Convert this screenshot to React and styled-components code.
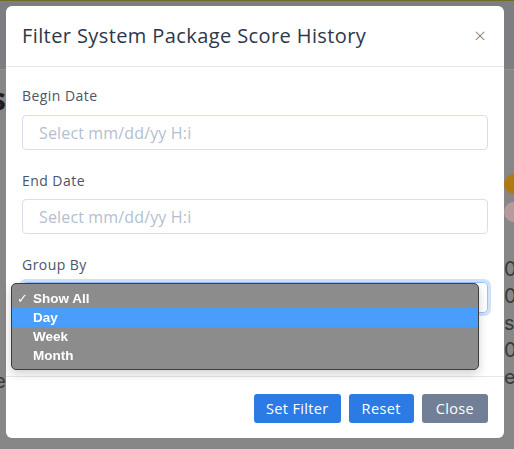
import React from 'react';
import styled, { createGlobalStyle } from 'styled-components';

const GlobalStyle = createGlobalStyle`
  html, body {
    margin: 0;
    padding: 0;
    height: 100%;
    background: #878787;
    overflow: hidden;
  }
  #root {
    height: 100%;
  }
  * {
    box-sizing: border-box;
  }
`;

const Page = styled.div`
  height: 100%;
  display: flex;
  flex-direction: column;
  border-top: 1px solid #6f6c2b;
  font-family: 'Open Sans', sans-serif;
`;

const TopBar = styled.div`
  height: 69px;
  background: #7d7e81;
  border-bottom: 1px solid #8f9093;
`;

const PageBody = styled.div`
  flex: 1;
  display: flex;
  justify-content: space-between;
`;

const Gutter = styled.div`
  width: ${(p) => p.width}px;
  overflow: hidden;
  display: flex;
  flex-direction: column;
  align-items: ${(p) => (p.right ? 'flex-start' : 'flex-end')};
  padding-top: ${(p) => p.top}px;
  color: #3c3c3c;
`;

const GhostHeading = styled.div`
  font-size: 30px;
  font-weight: 700;
  line-height: 30px;
  color: #1f1f1f;
  margin-bottom: 254px;
`;

const GhostText = styled.div`
  font-size: 20px;
  line-height: 26px;
  height: 27px;
  white-space: nowrap;
  color: #3a3a3a;
  font-family: 'Inter', sans-serif;
`;

const Dot = styled.div`
  width: 20px;
  height: 20px;
  border-radius: 50%;
  background: ${(p) => p.color};
  margin-bottom: 8px;
  flex: none;
`;

const Overlay = styled.div`
  position: fixed;
  inset: 0;
  padding: 6px 10px 0 6px;
`;

const Modal = styled.div`
  width: 498px;
  background: #fff;
  border-radius: 6px;
  font-family: 'Open Sans', sans-serif;
`;

const ModalHeader = styled.div`
  height: 61px;
  display: flex;
  align-items: center;
  justify-content: space-between;
  padding: 0 18px 2px 16px;
  border-bottom: 1px solid #e2e8f0;
`;

const Title = styled.h5`
  margin: 0;
  font-size: 20px;
  font-weight: 500;
  color: #2d3748;
  letter-spacing: 0.4px;
`;

const CloseIcon = styled.span`
  font-size: 21px;
  line-height: 1;
  color: #7b7b7b;
  font-weight: 300;
`;

const ModalBody = styled.div`
  padding: 19px 16px 63px;
`;

const Field = styled.div`
  position: relative;
  margin-bottom: ${(p) => (p.last ? 0 : 21)}px;
`;

const Label = styled.label`
  display: block;
  font-size: 14px;
  line-height: 20px;
  font-weight: 500;
  color: #4a5568;
  letter-spacing: 0.45px;
  margin-bottom: ${(p) => p.gap}px;
`;

const Input = styled.input`
  display: block;
  width: 100%;
  height: 35px;
  border: 1px solid #d7e0eb;
  border-radius: 4px;
  padding: 1px 16px 0;
  font-family: 'Open Sans', sans-serif;
  font-size: 16px;
  letter-spacing: 0.15px;
  color: #2d3748;
  outline: none;

  &::placeholder {
    color: #b3bfd0;
  }
`;

const Select = styled.div`
  height: 31px;
  border: 1px solid #9cc3f5;
  border-radius: 4px;
  box-shadow: 0 0 0 3px #cfe2fb;
`;

const Dropdown = styled.ul`
  position: absolute;
  left: -11px;
  top: 28px;
  width: 468px;
  margin: 0;
  padding: 5px 0 4px;
  list-style: none;
  background: #8c8c8c;
  border: 1px solid #3d3d3d;
  border-radius: 5px;
  box-shadow: 0 4px 10px rgba(0, 0, 0, 0.18);
  font-family: 'Liberation Sans', Arial, sans-serif;
`;

const Option = styled.li`
  display: flex;
  align-items: center;
  height: 19px;
  padding-left: 5px;
  font-size: 13.5px;
  font-weight: 700;
  color: #fff;
  background: ${(p) => (p.active ? '#4a9dfa' : 'transparent')};
`;

const Check = styled.span`
  width: 16px;
  font-size: 13px;
  font-weight: 400;
`;

const ModalFooter = styled.div`
  display: flex;
  justify-content: flex-end;
  gap: 8px;
  padding: 17px 16px 15px;
  border-top: 1px solid #e2e8f0;
`;

const Button = styled.button`
  height: 29px;
  padding: 0 ${(p) => p.pad}px;
  border: none;
  border-radius: 3px;
  background: ${(p) => (p.muted ? '#718096' : '#2c7be5')};
  color: #fff;
  font-family: 'Open Sans', sans-serif;
  font-size: 14.5px;
  font-weight: 500;
  letter-spacing: 0.35px;
`;

const options = ['Show All', 'Day', 'Week', 'Month'];

export default function App() {
  return (
    <>
      <GlobalStyle />
      <Page>
        <TopBar />
        <PageBody>
          <Gutter width={6} top={14}>
            <GhostHeading>s</GhostHeading>
            <GhostText>e</GhostText>
          </Gutter>
          <Gutter width={10} top={104} right>
            <Dot color="#b07a12" />
            <Dot color="#b69a9c" />
            <div style={{ height: 26 }} />
            <GhostText>0</GhostText>
            <GhostText>0</GhostText>
            <GhostText>st</GhostText>
            <GhostText>0</GhostText>
            <GhostText>er</GhostText>
          </Gutter>
        </PageBody>
      </Page>
      <Overlay>
        <Modal>
          <ModalHeader>
            <Title>Filter System Package Score History</Title>
            <CloseIcon>×</CloseIcon>
          </ModalHeader>
          <ModalBody>
            <Field>
              <Label gap={9}>Begin Date</Label>
              <Input placeholder="Select mm/dd/yy H:i" />
            </Field>
            <Field>
              <Label gap={8}>End Date</Label>
              <Input placeholder="Select mm/dd/yy H:i" />
            </Field>
            <Field last>
              <Label gap={7}>Group By</Label>
              <Select />
              <Dropdown>
                {options.map((o, i) => (
                  <Option key={o} active={i === 1}>
                    <Check>{i === 0 ? '✓' : ''}</Check>
                    {o}
                  </Option>
                ))}
              </Dropdown>
            </Field>
          </ModalBody>
          <ModalFooter>
            <Button pad={12}>Set Filter</Button>
            <Button pad={13}>Reset</Button>
            <Button pad={14} muted>Close</Button>
          </ModalFooter>
        </Modal>
      </Overlay>
    </>
  );
}
